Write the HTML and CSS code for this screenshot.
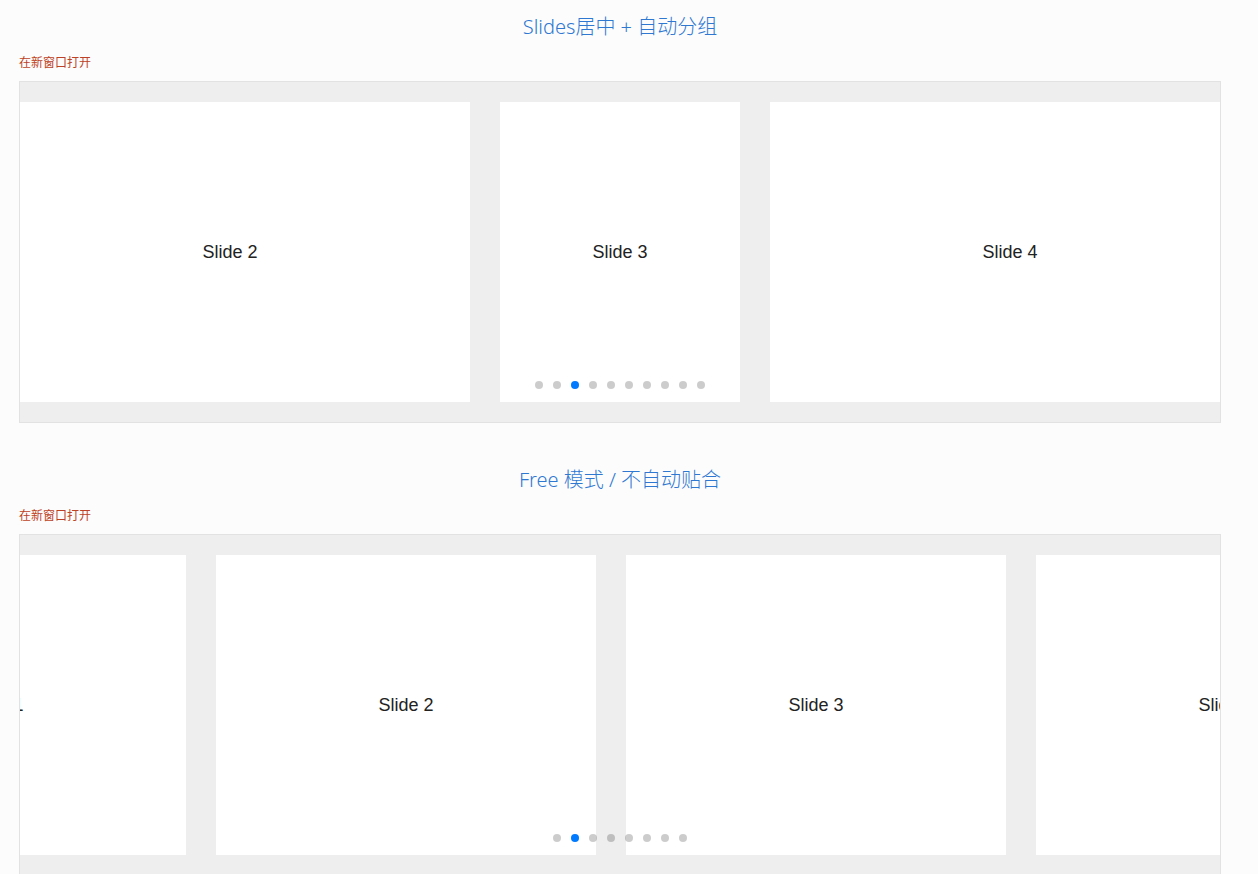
FILE: index.html
```html
<!DOCTYPE html>
<html lang="zh-CN">
<head>
<meta charset="utf-8">
<title>Swiper demos</title>
<link rel="stylesheet" href="styles.css">
</head>
<body>
<section class="demo">
  <h2 class="demo-title">Slides居中 + 自动分组</h2>
  <a class="demo-link" href="#">在新窗口打开</a>
  <div class="swiper">
    <div class="swiper-wrapper wrapper-centered">
      <div class="slide slide-narrow">Slide 1</div>
      <div class="slide slide-wide">Slide 2</div>
      <div class="slide slide-narrow">Slide 3</div>
      <div class="slide slide-wide">Slide 4</div>
      <div class="slide slide-narrow">Slide 5</div>
    </div>
    <div class="pagination">
      <span class="bullet"></span><span class="bullet"></span><span class="bullet active"></span><span class="bullet"></span><span class="bullet"></span><span class="bullet"></span><span class="bullet"></span><span class="bullet"></span><span class="bullet"></span><span class="bullet"></span>
    </div>
  </div>
</section>
<section class="demo">
  <h2 class="demo-title">Free 模式 / 不自动贴合</h2>
  <a class="demo-link" href="#">在新窗口打开</a>
  <div class="swiper">
    <div class="swiper-wrapper wrapper-free">
      <div class="slide slide-free">Slide 1</div>
      <div class="slide slide-free">Slide 2</div>
      <div class="slide slide-free">Slide 3</div>
      <div class="slide slide-free">Slide 4</div>
    </div>
    <div class="pagination">
      <span class="bullet"></span><span class="bullet active"></span><span class="bullet"></span><span class="bullet"></span><span class="bullet"></span><span class="bullet"></span><span class="bullet"></span><span class="bullet"></span>
    </div>
  </div>
</section>
</body>
</html>
```
FILE: styles.css
```css
html, body {
  margin: 0;
  padding: 0;
  background: #fcfcfc;
  font-family: "Liberation Sans", "Noto Sans CJK SC", sans-serif;
}

.demo {
  width: 1202px;
  margin: 0 0 30px 19px;
  display: flex;
  flex-direction: column;
}

.demo-title {
  margin: 0;
  padding-top: 14px;
  font-family: "Noto Sans", "Noto Sans CJK SC", sans-serif;
  font-weight: 300;
  font-size: 20px;
  line-height: 26px;
  color: #2f78d2;
  text-align: center;
}

.demo-link {
  margin-top: 14px;
  align-self: flex-start;
  font-family: "Noto Sans CJK SC", sans-serif;
  font-size: 12px;
  line-height: 16px;
  color: #bd4124;
  text-decoration: none;
}

.swiper {
  position: relative;
  margin-top: 11px;
  border: 1px solid #e2e2e2;
  background: #eeeeee;
  padding: 20px 0;
  overflow: hidden;
}

.swiper-wrapper {
  display: flex;
  gap: 30px;
  height: 300px;
}

.wrapper-centered {
  transform: translateX(-300px);
}

.wrapper-free {
  transform: translateX(-214px);
}

.slide {
  flex: none;
  height: 300px;
  background: #ffffff;
  display: flex;
  align-items: center;
  justify-content: center;
  font-size: 18px;
  color: #222222;
}

.slide-wide { width: 480px; }
.slide-narrow { width: 240px; }
.slide-free { width: 380px; }

.pagination {
  position: absolute;
  left: 0;
  right: 0;
  bottom: 33px;
  display: flex;
  justify-content: center;
}

.bullet {
  width: 8px;
  height: 8px;
  margin: 0 5px;
  border-radius: 50%;
  background: rgba(0, 0, 0, 0.2);
}

.bullet.active {
  background: #007aff;
}
```
